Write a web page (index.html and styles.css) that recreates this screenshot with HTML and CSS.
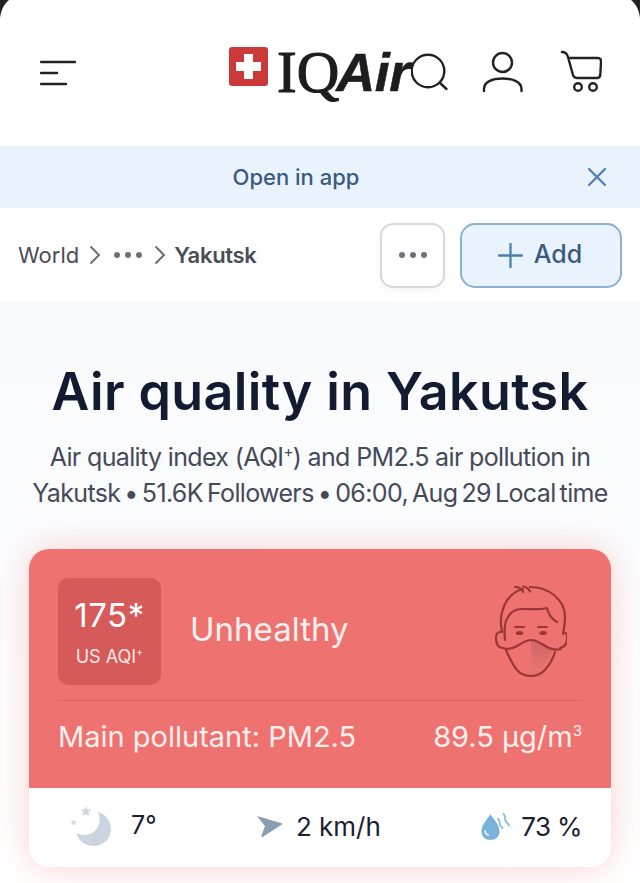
FILE: index.html
```html
<!DOCTYPE html>
<html lang="en">
<head>
<meta charset="utf-8">
<title>Air quality in Yakutsk</title>
<link rel="stylesheet" href="styles.css">
</head>
<body>
<svg class="corner corner-l" width="10" height="19" viewBox="0 0 10 19"><path d="M0 0H9C4 4 1 10 0 18Z" fill="#222"/></svg>
<svg class="corner corner-r" width="10" height="19" viewBox="0 0 10 19"><path d="M10 0H1C6 4 9 10 10 18Z" fill="#222"/></svg>
<header class="header">
  <svg class="menu" width="36" height="26" viewBox="0 0 36 26"><path d="M1 2H35M1 13H17M1 24H26" fill="none" stroke="#222" stroke-width="2.4" stroke-linecap="round"/></svg>
  <div class="logo">
    <svg class="flag" width="39" height="39" viewBox="0 0 39 39"><rect width="39" height="39" rx="3" fill="#cb3a38"/><path d="M15 7h9v8h8v9h-8v8h-9v-8H7v-9h8z" fill="#fff"/></svg>
    <span class="logo-iq">IQ</span><span class="logo-air">Air</span>
  </div>
  <svg class="search" width="38" height="38" viewBox="0 0 38 38"><circle cx="17" cy="18" r="16.300" fill="none" stroke="#222" stroke-width="2.4"/><path d="M29 30l6.500 6" stroke="#222" stroke-width="2.4" stroke-linecap="round"/></svg>
  <svg class="user" width="42" height="43" viewBox="0 0 42 43"><circle cx="21.500" cy="12.500" r="9.500" fill="none" stroke="#222" stroke-width="2.4"/><path d="M3 41v-2C3 32 11 28.500 21.500 28.500S40.500 32 40.500 39v2" fill="none" stroke="#222" stroke-width="2.400" stroke-linecap="round"/></svg>
  <svg class="cart" width="42" height="42" viewBox="0 0 42 42"><path d="M2 2c3 0 5 1.500 6 5l5 18c.7 2.200 2 3 4 3h20c2 0 3-1 3.300-3L41 12c.3-2.500-1-4-3-4H9" fill="none" stroke="#222" stroke-width="2.400" stroke-linecap="round" stroke-linejoin="round"/><circle cx="18" cy="37" r="3.800" fill="none" stroke="#222" stroke-width="2.400"/><circle cx="33" cy="37" r="3.800" fill="none" stroke="#222" stroke-width="2.400"/></svg>
</header>
<div class="banner">
  <span class="banner-text">Open in app</span>
  <svg class="banner-close" width="18" height="18" viewBox="0 0 18 18"><path d="M1 1l16 16M17 1L1 17" stroke="#4a7fb0" stroke-width="2.200" stroke-linecap="round"/></svg>
</div>
<nav class="crumbs">
  <div class="trail">
    <span>World</span>
    <svg class="chev" width="12" height="20" viewBox="0 0 12 20"><path d="M1.500 1.500L10 10l-8.500 8.500" fill="none" stroke="#6a6e76" stroke-width="2"/></svg>
    <span class="dots"><i></i><i></i><i></i></span>
    <svg class="chev" width="12" height="20" viewBox="0 0 12 20"><path d="M1.500 1.500L10 10l-8.500 8.500" fill="none" stroke="#6a6e76" stroke-width="2"/></svg>
    <strong>Yakutsk</strong>
  </div>
  <button class="more"><span class="dots"><i></i><i></i><i></i></span></button>
  <button class="add">
    <svg width="25" height="25" viewBox="0 0 26 26"><path d="M13 1v24M1 13h24" stroke="#4a7fb0" stroke-width="2.400" stroke-linecap="round"/></svg>
    <span>Add</span>
  </button>
</nav>
<main class="main">
  <h1>Air quality in Yakutsk</h1>
  <p class="sub">Air quality index (AQI<sup>+</sup>) and PM2.5 air pollution in<br><span class="sub-line">Yakutsk • 51.6K Followers • 06:00, Aug 29 Local time</span></p>
  <section class="card">
    <div class="card-top">
      <div class="summary">
        <div class="aqi-box">
          <div class="aqi-num">175*</div>
          <div class="aqi-label">US AQI<sup>+</sup></div>
        </div>
        <div class="status">Unhealthy</div>
        <svg class="face" width="72" height="93" viewBox="0 0 72 93">
          <defs><linearGradient id="mk" x1="0" y1="0" x2="0" y2="1"><stop offset="0" stop-color="#cf6668"/><stop offset="1" stop-color="#ea7674"/></linearGradient></defs>
          <path d="M36 55c6 0 12 7 21 10-2 8-9 19-20 25z" fill="url(#mk)"/>
          <g fill="none" stroke="#9a3538" stroke-width="2.200" stroke-linecap="round" stroke-linejoin="round">
            <path d="M7 46C5 38 6 28 9 21 13 12 20 6 28 4"/>
            <path d="M20 2c4 0 7 2 8 5"/>
            <path d="M28 1.500c3 .5 6 2.500 7 5"/>
            <path d="M35 2c18 0 35 12 35 30 0 6-1 12-2 17"/>
            <path d="M10 55C9 46 9 38 13 32c3-5 7-8 13-8 9 0 18 1 26-1 1 4 2 7 5 10 1.500 2 3.500 3 5 4"/>
            <path d="M7 47c-4-1-6 2-6 6 0 5 2 9 6 10M69 48c3-1 3 3 3 6 0 5-3 8-7 9"/>
            <path d="M8 63c5 2 9 1 14-2 5-3 9-6 14-6 7 0 11 5 18 8 4 1.700 8 2 12 1"/>
            <path d="M11 65c3 7 6 14 11 20 4 4.500 9 6 14 6s10-2 14-6c5-6 8-11 10-18"/>
            <path d="M20 42h9M43 42h9"/>
          </g>
          <ellipse cx="24.500" cy="48" rx="3.800" ry="2" fill="#9a3538"/><ellipse cx="48" cy="48" rx="3.800" ry="2" fill="#9a3538"/>
        </svg>
      </div>
      <div class="pollutant">
        <span>Main pollutant: PM2.5</span>
        <span>89.5 µg/m<sup>3</sup></span>
      </div>
    </div>
    <div class="card-bottom">
      <div class="metric">
        <svg width="42" height="42" viewBox="0 0 42 42"><path d="M28 6C36 8 41 15 41 24 41 33 33 40 23 40 15 40 9 35 6 27 12 30 20 30 25 25 30 20 31 12 28 6Z" fill="#cbd5df"/><path d="M16 0l1.500 3.500 3.800.3-2.900 2.500.9 3.700L16 8l-3.300 2 .9-3.700-2.900-2.500 3.800-.3z" fill="#cfd8de"/><path d="M3.500 13l1 2.300 2.500.2-1.900 1.600.6 2.400-2.200-1.300-2.200 1.300.6-2.400L0 15.500l2.500-.2z" fill="#d5dde2"/></svg>
        <span class="temp">7°</span>
      </div>
      <div class="metric wind">
        <svg width="26" height="23" viewBox="0 0 26 23"><path d="M1.500 1.400L24.800 8.200c.7.200.7.900.1 1.200L6 21.800c-1 .6-1.800 0-1.600-1L8 11 1 2.500c-.5-.7-.2-1.300.5-1.100z" fill="#8a9db3"/></svg>
        <span>2 km/h</span>
      </div>
      <div class="metric">
        <svg width="30" height="28" viewBox="0 0 30 28"><path d="M9.500 1C7 6 .5 11 .5 18.500c0 5 4 8.500 9 8.500s9-3.500 9-8.500C18.500 11 12 6 9.500 1z" fill="#79b3dc"/><path d="M4 18c0 2 1.200 3.500 3.200 4" fill="none" stroke="#fff" stroke-width="1.400" stroke-linecap="round"/><path d="M17 6c3 2.500 1 4 2 6 .4 1 1.400 2 2.500 3M22.500 1c3 2.500 1 4.500 2 6.500.5 1 1.800 2.500 3.500 5" fill="none" stroke="#8fbfdf" stroke-width="2" stroke-linecap="round"/></svg>
        <span class="humidity">73 %</span>
      </div>
    </div>
  </section>
</main>
</body>
</html>
```
FILE: styles.css
```css
* { box-sizing: border-box; }
html, body { margin: 0; height: 883px; overflow: hidden; }
body { position: relative; background: #fff; font-family: "Inter", "Noto Sans", sans-serif; color: #1b2030; }
.corner { position: absolute; top: 0; pointer-events: none; }
.corner-l { left: 0; }
.corner-r { right: 0; }

.header { height: 146px; display: flex; align-items: flex-start; }
.menu { margin: 60px 0 0 40px; flex: none; }
.logo { display: flex; align-items: flex-start; margin: 47px 0 0 153px; height: 50px; width: 182px; flex: none; }
.flag { flex: none; }
.logo-iq { font-family: "Liberation Serif", serif; font-weight: 400; font-size: 59px; line-height: 50px; color: #1d1d1f; margin-left: 9px; -webkit-text-stroke: 1.2px #1d1d1f; }
.logo-air { font-family: "Liberation Sans", sans-serif; font-weight: 700; font-style: italic; font-size: 54px; line-height: 50px; color: #1d1d1f; letter-spacing: -.5px; margin-left: -3px; -webkit-text-stroke: .5px #1d1d1f; }
.search { margin: 53px 0 0 0; flex: none; }
.user { margin: 50px 0 0 32px; flex: none; }
.cart { margin: 50px 0 0 37px; flex: none; }

.banner { height: 62px; background: #e9f3fd; border-top: 1px solid #eef1f4; border-bottom: 1px solid #eef0f2; display: flex; align-items: center; justify-content: center; padding-right: 48px; position: relative; }
.banner-text { color: #3a5a7f; font-size: 22px; font-weight: 500; }
.banner-close { position: absolute; right: 34px; top: 21px; }

.crumbs { height: 94px; background: #fff; display: flex; align-items: center; padding: 0 18px; }
.trail { display: flex; align-items: center; font-size: 22px; color: #4a4e58; flex: 1; }
.trail strong { font-weight: 600; margin-left: 8px; letter-spacing: -.3px; }
.trail .chev { margin-left: 10px; }
.trail .dots { margin-left: 13px; }
.trail .dots + .chev { margin-left: 12px; }
.dots { display: inline-flex; gap: 5px; }
.dots i { width: 6px; height: 6px; border-radius: 50%; background: #6e717a; display: block; }
.more { width: 65px; height: 65px; border: 2px solid #d8d8da; border-radius: 13px; background: #fff; display: flex; align-items: center; justify-content: center; padding: 0; box-shadow: 0 4px 10px rgba(0,0,0,.04); }
.add { width: 162px; height: 65px; margin-left: 15px; border: 2px solid #8db0d4; border-radius: 15px; background: #e9f3fd; display: flex; align-items: center; justify-content: center; gap: 11px; padding: 0 2px 0 0; color: #3a5a7f; font: 500 25px "Inter", sans-serif; }
.add span { position: relative; top: -1px; }

.main { height: 575px; background: linear-gradient(#f7fafc, #fbfcfe 220px, #fff); padding: 56px 29px 0; text-align: center; }
h1 { margin: 0; font-size: 52px; line-height: 68px; font-weight: 600; color: #131b31; white-space: nowrap; letter-spacing: .4px; }
.sub { margin: 13px -20px 0; font-size: 25px; line-height: 36px; font-weight: 400; color: #454a58; letter-spacing: -.65px; white-space: nowrap; }
.sub sup { font-size: 15px; line-height: 0; }
.sub-line { word-spacing: -2.300px; }

.card { margin-top: 38px; height: 318px; border-radius: 20px; overflow: hidden; background: #fff; box-shadow: 0 0 34px rgba(238,115,112,.32); }
.card-top { height: 239px; background: #ee7370; padding: 29px 29px 0; color: #fff; }
.summary { display: flex; align-items: center; height: 107px; }
.aqi-box { width: 103px; height: 107px; background: #d65a5a; border-radius: 10px; display: flex; flex-direction: column; align-items: center; justify-content: center; flex: none; }
.aqi-num { font-size: 33px; line-height: 40px; font-weight: 400; letter-spacing: .5px; }
.aqi-label { font-size: 18px; line-height: 24px; margin-top: 10px; color: #fde7e6; }
.aqi-label sup { font-size: 11px; line-height: 0; }
.status { margin: 0 0 5px 29px; font-size: 33px; font-weight: 400; flex: 1; text-align: left; color: #fdf0ef; }
.face { flex: none; margin-right: 15px; }
.pollutant { margin-top: 15px; border-top: 1px solid #e2625f; padding-top: 16px; display: flex; justify-content: space-between; font-size: 29px; line-height: 40px; color: #fdeeed; white-space: nowrap; }
.pollutant sup { font-size: 15px; line-height: 0; }
.card-bottom { height: 79px; display: flex; justify-content: space-between; align-items: center; padding: 0 29px 2px 41px; font-size: 26px; color: #1b2030; }
.metric { display: flex; align-items: center; gap: 10px; }
.wind { gap: 13px; }
.temp { margin-bottom: 4px; margin-left: 9px; font-size: 25px; }
.humidity { letter-spacing: -.6px; }
```
